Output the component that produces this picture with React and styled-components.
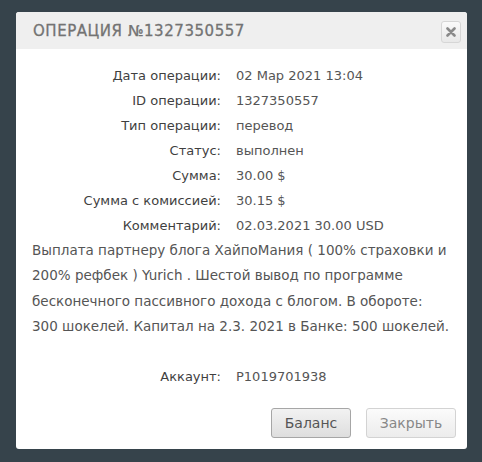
import React from "react";
import styled, { createGlobalStyle } from "styled-components";

const GlobalStyle = createGlobalStyle`
  html, body {
    margin: 0;
    padding: 0;
    background: #36434b;
  }
  body {
    font-family: "DejaVu Sans", "Noto Sans", sans-serif;
  }
`;

const Page = styled.div`
  width: 482px;
  height: 462px;
  padding: 12px 15px 0 16px;
  box-sizing: border-box;
`;

const Modal = styled.div`
  background: #fff;
  border-radius: 3px;
  overflow: hidden;
  height: 437px;
  display: flex;
  flex-direction: column;
`;

const Header = styled.div`
  height: 37px;
  background: #efefef;
  display: flex;
  align-items: center;
  justify-content: space-between;
  padding: 0 6px 0 17px;
  box-sizing: border-box;
`;

const Title = styled.h2`
  margin: 0;
  font-family: "DejaVu Sans", sans-serif;
  font-size: 15px;
  font-weight: 400;
  letter-spacing: 0.55px;
  color: #737373;
  text-transform: uppercase;
  -webkit-text-stroke: 0.3px #737373;
`;

const CloseBtn = styled.button`
  width: 20px;
  height: 22px;
  margin-top: 2px;
  padding: 0;
  border: 1px solid #d6d6d6;
  border-radius: 3px;
  background: linear-gradient(#fafafa, #e8e8e8);
  display: flex;
  align-items: center;
  justify-content: center;
`;

const Body = styled.div`
  padding: 14px 16px 0 16px;
  color: #555;
  font-size: 13px;
`;

const Rows = styled.div`
  display: grid;
  grid-template-columns: 189px 1fr;
  column-gap: 15px;
`;

const Label = styled.div`
  text-align: right;
  line-height: 25px;
  color: #3f3f3f;
`;

const Value = styled.div`
  line-height: 25px;
  color: #555;
`;

const Comment = styled.p`
  margin: 0;
  font-size: 13.5px;
  line-height: 25.3px;
  color: #555;
`;

const AccountRow = styled(Rows)`
  margin-top: 25px;
`;

const Footer = styled.div`
  margin-top: auto;
  display: flex;
  justify-content: flex-end;
  gap: 15px;
  padding: 0 11px 11px 0;
`;

const Button = styled.button`
  height: 30px;
  width: ${({ primary }) => (primary ? "80px" : "90px")};
  padding: 0;
  font-family: "DejaVu Sans", sans-serif;
  font-size: 14px;
  border-radius: 3px;
  border: 1px solid ${({ primary }) => (primary ? "#a6a6a6" : "#d3d3d3")};
  color: ${({ primary }) => (primary ? "#555" : "#888")};
  background: ${({ primary }) =>
    primary
      ? "linear-gradient(#f2f2f2, #dedede)"
      : "linear-gradient(#fbfbfb, #ececec)"};
`;

const rows = [
  ["Дата операции:", "02 Мар 2021 13:04"],
  ["ID операции:", "1327350557"],
  ["Тип операции:", "перевод"],
  ["Статус:", "выполнен"],
  ["Сумма:", "30.00 $"],
  ["Сумма с комиссией:", "30.15 $"],
  ["Комментарий:", "02.03.2021 30.00 USD"],
];

export default function App() {
  return (
    <>
      <GlobalStyle />
      <Page>
        <Modal>
          <Header>
            <Title>Операция №1327350557</Title>
            <CloseBtn aria-label="close">
              <svg width="10" height="10" viewBox="0 0 10 10">
                <path d="M1.5 1.5 L8.5 8.5 M8.5 1.5 L1.5 8.5" stroke="#8a8a8a" strokeWidth="2.6" strokeLinecap="round" />
              </svg>
            </CloseBtn>
          </Header>
          <Body>
            <Rows>
              {rows.map(([l, v]) => (
                <React.Fragment key={l}>
                  <Label>{l}</Label>
                  <Value>{v}</Value>
                </React.Fragment>
              ))}
            </Rows>
            <Comment>
              Выплата партнеру блога ХайпоМания ( 100% страховки и 200% рефбек ) Yurich . Шестой вывод по программе бесконечного пассивного дохода с блогом. В обороте: 300 шокелей. Капитал на 2.3. 2021 в Банке: 500 шокелей.
            </Comment>
            <AccountRow>
              <Label>Аккаунт:</Label>
              <Value>P1019701938</Value>
            </AccountRow>
          </Body>
          <Footer>
            <Button primary>Баланс</Button>
            <Button>Закрыть</Button>
          </Footer>
        </Modal>
      </Page>
    </>
  );
}
